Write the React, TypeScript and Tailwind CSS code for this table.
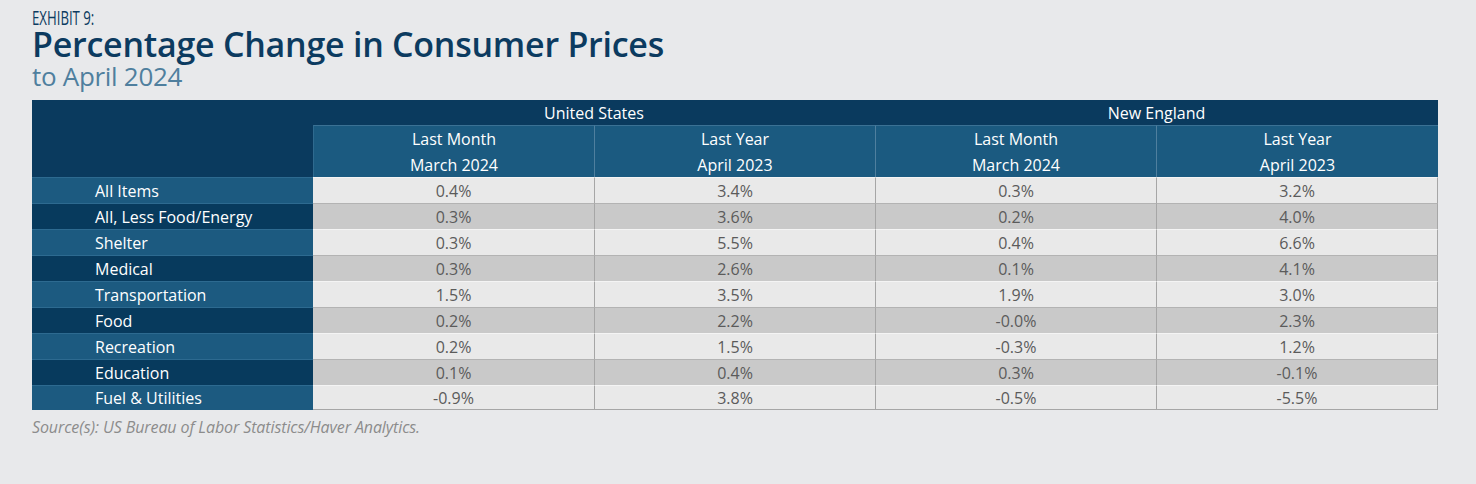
import React from "react";

const rows: [string, string, string, string, string][] = [
  ["All Items", "0.4%", "3.4%", "0.3%", "3.2%"],
  ["All, Less Food/Energy", "0.3%", "3.6%", "0.2%", "4.0%"],
  ["Shelter", "0.3%", "5.5%", "0.4%", "6.6%"],
  ["Medical", "0.3%", "2.6%", "0.1%", "4.1%"],
  ["Transportation", "1.5%", "3.5%", "1.9%", "3.0%"],
  ["Food", "0.2%", "2.2%", "-0.0%", "2.3%"],
  ["Recreation", "0.2%", "1.5%", "-0.3%", "1.2%"],
  ["Education", "0.1%", "0.4%", "0.3%", "-0.1%"],
  ["Fuel & Utilities", "-0.9%", "3.8%", "-0.5%", "-5.5%"],
];

const subHeads = [
  ["Last Month", "March 2024"],
  ["Last Year", "April 2023"],
  ["Last Month", "March 2024"],
  ["Last Year", "April 2023"],
];

export default function App() {
  return (
    <div
      className="w-[1476px] h-[484px] bg-[#e8e9eb] pl-[32px] pt-[8px]"
      style={{ fontFamily: '"Open Sans", "Noto Sans", sans-serif' }}
    >
      <div className="h-[20px] text-[20px] leading-[20px] text-[#0c3b60]">
        <span className="inline-block origin-left scale-x-[0.66] whitespace-nowrap">EXHIBIT 9:</span>
      </div>
      <div className="text-[34px] leading-[32px] font-semibold text-[#0c3b60] tracking-[-0.25px]">
        Percentage Change in Consumer Prices
      </div>
      <div className="mt-[2px] text-[26px] leading-[28px] text-[#4f7f9e] tracking-[-0.3px]">to April 2024</div>

      <div className="mt-[10px] w-[1406px] grid grid-cols-[281px_281px_281px_281px_282px] text-[16px]">
        <div className="row-span-2 bg-[#0a3a5e]" />
        <div className="col-span-2 h-[25px] bg-[#0a3a5e] text-white flex items-center justify-center">
          United States
        </div>
        <div className="col-span-2 h-[25px] bg-[#0a3a5e] text-white flex items-center justify-center">
          New England
        </div>
        {subHeads.map((t, i) => (
          <div
            key={i}
            className={`h-[52px] bg-[#1b5a80] text-white flex flex-col items-center justify-center leading-[26px] border-t border-t-[#3b7194] ${
              i === 0 ? "border-l border-l-[#2f6a8f]" : "border-l border-l-[#4f7f9e]"
            }`}
          >
            <span>{t[0]}</span>
            <span>{t[1]}</span>
          </div>
        ))}
        {rows.map((r, ri) => {
          const odd = ri % 2 === 0;
          const last = ri === rows.length - 1;
          return (
            <React.Fragment key={ri}>
              <div
                className={`${last ? "h-[25px]" : "h-[26px]"} pl-[63px] flex items-center text-white border-t border-t-[#2d6a90] ${
                  odd ? "bg-[#1c5a80]" : "bg-[#073a5d]"
                }`}
              >
                {r[0]}
              </div>
              {r.slice(1).map((v, ci) => (
                <div
                  key={ci}
                  className={`${last ? "h-[25px] border-b border-b-[#a6a6a6]" : "h-[26px]"} flex items-center justify-center text-[#5b5b5b] border-t ${
                    odd ? "bg-[#e9e9e9] border-t-[#f4f4f4]" : "bg-[#c9c9c9] border-t-[#b3b3b3]"
                  } ${ci > 0 ? "border-l border-l-[#a6a6a6]" : ""} ${
                    ci === 3 ? "border-r border-r-[#a6a6a6]" : ""
                  }`}
                >
                  {v}
                </div>
              ))}
            </React.Fragment>
          );
        })}
      </div>
      <div className="mt-[7px] text-[16px] leading-[20px] italic text-[#8c8c8c] tracking-[-0.1px]">
        Source(s): US Bureau of Labor Statistics/Haver Analytics.
      </div>
    </div>
  );
}
